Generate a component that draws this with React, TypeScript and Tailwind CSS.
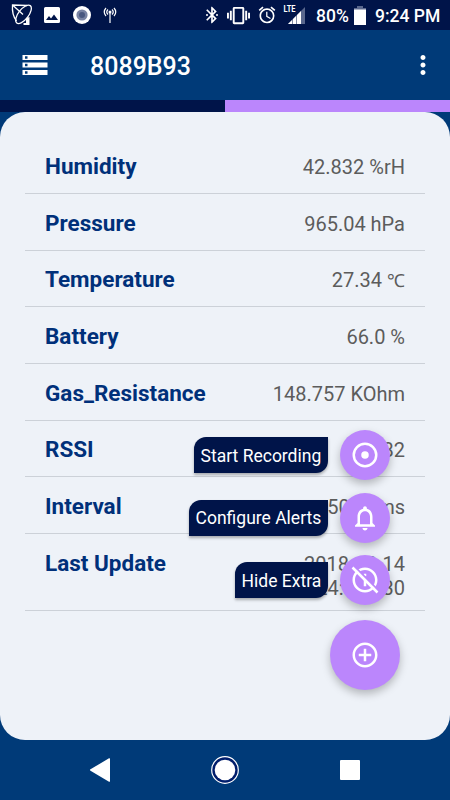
import React from 'react';
import { MdOutlineInfo, MdNotificationsNone, MdAddCircleOutline, MdBluetooth, MdVibration, MdAlarm, MdStorage, MdMoreVert } from 'react-icons/md';

const readings = [
  { label: 'Humidity', value: '42.832 %rH' },
  { label: 'Pressure', value: '965.04 hPa' },
  { label: 'Temperature', value: <>27.34 <span className="text-[18px]">℃</span></> },
  { label: 'Battery', value: '66.0 %' },
  { label: 'Gas_Resistance', value: '148.757 KOhm' },
  { label: 'RSSI', value: '-82' },
  { label: 'Interval', value: '5000 ms' },
];

const StatusBar: React.FC = () => (
  <div className="flex h-[30px] shrink-0 items-center bg-[#001449] text-white">
    <svg className="ml-[11px] h-[22px] w-[22px]" viewBox="0 0 22 22" fill="none" stroke="currentColor" strokeWidth="1.3">
      <ellipse cx="12.500" cy="10.300" rx="5" ry="11" transform="rotate(38 12.500 10.300)" />
      <path d="M5.500 17C2.500 13 1 7 1.500 1L16 1.500M1.500 1L12 10.500" />
      <path d="M15 14l3.500-1v8h-6v-2H15z" fill="currentColor" stroke="none" />
    </svg>
    <svg className="ml-[11px] h-4 w-4" viewBox="0 0 16 16">
      <path fillRule="evenodd" fill="currentColor" d="M1.500 0h13A1.500 1.500 0 0 1 16 1.500v13a1.500 1.500 0 0 1-1.500 1.500h-13A1.500 1.500 0 0 1 0 14.500v-13A1.500 1.500 0 0 1 1.500 0zM2 13h12L10 7.500l-3 4-2-2.500z" />
    </svg>
    <svg className="ml-[13px] h-[18px] w-[18px]" viewBox="0 0 18 18">
      <circle cx="9" cy="9" r="9" fill="#fff" />
      <circle cx="9" cy="9" r="5.600" fill="#7883a3" />
      <circle cx="9" cy="9" r="3" fill="#48577f" />
    </svg>
    <svg className="ml-3 h-4 w-[14px]" viewBox="0 0 14 16" fill="none" stroke="currentColor" strokeWidth="1.2">
      <path d="M3 1Q-.5 5 3 9M5 2.500Q2.500 5 5 7.500M11 1Q14.500 5 11 9M9 2.500Q11.500 5 9 7.500M7 5v11" />
      <circle cx="7" cy="5" r="1.500" fill="currentColor" stroke="none" />
    </svg>
    <span className="relative ml-[85px] h-5 w-5">
      <MdBluetooth className="h-5 w-5" />
      <svg className="absolute inset-0 h-5 w-5" viewBox="0 0 20 20" fill="currentColor">
        <circle cx="5" cy="10" r="1" />
        <circle cx="15" cy="10" r="1" />
      </svg>
    </span>
    <MdVibration className="ml-[5px] h-[23px] w-[23px]" />
    <MdAlarm className="ml-[7px] h-5 w-5" />
    <svg className="ml-[6px] h-[22px] w-[24px]" viewBox="0 0 24 22">
      <path d="M5 20L22 3v17z" fill="#59678d" />
      <path d="M5 20L18 7v13z" fill="#fff" />
      <path d="M9.500 15v5M13.500 11v9" stroke="#001449" strokeWidth=".5" />
      <path d="M0 0h13v9H0z" fill="#001449" />
      <text x="0.500" y="8.200" fontSize="9" fontWeight="700" textLength="12" lengthAdjust="spacingAndGlyphs" fontFamily="Roboto, sans-serif" fill="#fff">LTE</text>
    </svg>
    <span className="ml-[9px] w-[33px] pt-[2px] text-[17.500px] font-medium whitespace-nowrap">80%</span>
    <svg className="ml-[5px] h-[19px] w-3" viewBox="0 0 12 19">
      <path d="M3 0h6v2h3v4H0V2h3z" fill="#59678d" />
      <path d="M0 3.500h12V19H0z" fill="#fff" />
    </svg>
    <span className="ml-[9px] pt-[2px] text-[17.500px] font-medium whitespace-nowrap">9:24 PM</span>
  </div>
);

const RecordIcon: React.FC = () => (
  <svg className="h-[30px] w-[30px]" viewBox="0 0 30 30">
    <circle cx="15" cy="15" r="11.250" fill="none" stroke="currentColor" strokeWidth="2.500" />
    <circle cx="15" cy="15" r="3.750" fill="currentColor" />
  </svg>
);

const HideInfoIcon: React.FC = () => (
  <span className="relative h-[30px] w-[30px]">
    <MdOutlineInfo className="h-[30px] w-[30px]" />
    <svg className="absolute inset-0 h-[30px] w-[30px]" viewBox="0 0 30 30">
      <path d="M5 2L28 25" stroke="#bb86fc" strokeWidth="1.800" />
      <path d="M2.500 2.500L27.500 27.500" stroke="#fff" strokeWidth="2.500" />
    </svg>
  </span>
);

const actions = [
  { label: 'Start Recording', icon: <RecordIcon /> },
  { label: 'Configure Alerts', icon: <MdNotificationsNone className="h-[30px] w-[30px]" /> },
  { label: 'Hide Extra', icon: <HideInfoIcon /> },
];

const App: React.FC = () => {
  return (
    <div className="relative flex h-[800px] w-[450px] flex-col overflow-hidden bg-[#003a78] font-[Roboto,sans-serif]">
      <StatusBar />
      <header className="flex h-[70px] shrink-0 items-center text-white">
        <MdStorage className="ml-5 h-[30px] w-[30px]" />
        <h1 className="ml-10 flex-1 pt-[2px] text-[25px] leading-none font-medium">8089B93</h1>
        <MdMoreVert className="mr-3 h-[30px] w-[30px]" />
      </header>
      <div className="flex h-[12px] shrink-0">
        <div className="w-1/2 bg-[#001449]" />
        <div className="w-1/2 bg-[#bb86fc]" />
      </div>
      <main className="h-[628px] shrink-0 rounded-[25px] bg-[#eef2f8] px-[25px] pt-[25.300px]">
        {readings.map((item) => (
          <div key={item.label} className="flex h-[56.670px] items-center justify-between border-b border-[#ccd1d8] px-5 pt-[3.500px]">
            <span className="text-[22.500px] font-bold text-[#00307a]">{item.label}</span>
            <span className="text-[20px] text-[#5c5c5c]">{item.value}</span>
          </div>
        ))}
        <div className="flex h-[76.670px] items-start justify-between border-b border-[#ccd1d8] px-5">
          <span className="pt-[13px] text-[22.500px] font-bold text-[#00307a]">Last Update</span>
          <span className="w-[125px] pt-[18px] text-right text-[20px] leading-6 text-[#5c5c5c]">2018-12-14 21:24:06.830</span>
        </div>
      </main>

      <div className="absolute top-[430px] right-[50px] flex flex-col items-end">
        <div className="flex flex-col gap-[12.500px] pr-[10px]">
          {actions.map((action) => (
            <div key={action.label} className="flex items-center justify-end gap-[12.500px]">
              <span className="flex h-9 items-center rounded-tl-[12px] rounded-br-[12px] bg-[#001449] px-[6.250px] pt-[2px] text-[17.500px] whitespace-nowrap text-white shadow-[0_2px_3px_rgba(0,0,0,0.3)]">{action.label}</span>
              <button type="button" className="flex h-[50px] w-[50px] items-center justify-center rounded-full bg-[#bb86fc] text-white shadow-[0_4px_8px_rgba(0,0,0,0.25)]">{action.icon}</button>
            </div>
          ))}
        </div>
        <button type="button" className="mt-[15px] flex h-[70px] w-[70px] items-center justify-center rounded-full bg-[#bb86fc] text-white shadow-[0_4px_8px_rgba(0,0,0,0.25)]">
          <MdAddCircleOutline className="h-[30px] w-[30px]" />
        </button>
      </div>

      <nav className="flex h-[60px] shrink-0 items-center justify-between pr-[90px] pl-[89px] text-white">
        <svg className="h-6 w-[22px]" viewBox="0 0 22 24" fill="currentColor">
          <path d="M1.500 11.300L20 .3q1-.5 1 .7v22q0 1.200-1 .7L1.500 12.700q-1.200-.7 0-1.400z" />
        </svg>
        <svg className="-ml-[2px] h-7 w-7" viewBox="0 0 28 28">
          <circle cx="14" cy="14" r="13.300" fill="#001d6c" stroke="#fff" strokeWidth="1.200" />
          <circle cx="14" cy="14" r="10.300" fill="#fff" />
        </svg>
        <div className="h-5 w-5 rounded-[1px] bg-white" />
      </nav>
    </div>
  );
};

export default App;
